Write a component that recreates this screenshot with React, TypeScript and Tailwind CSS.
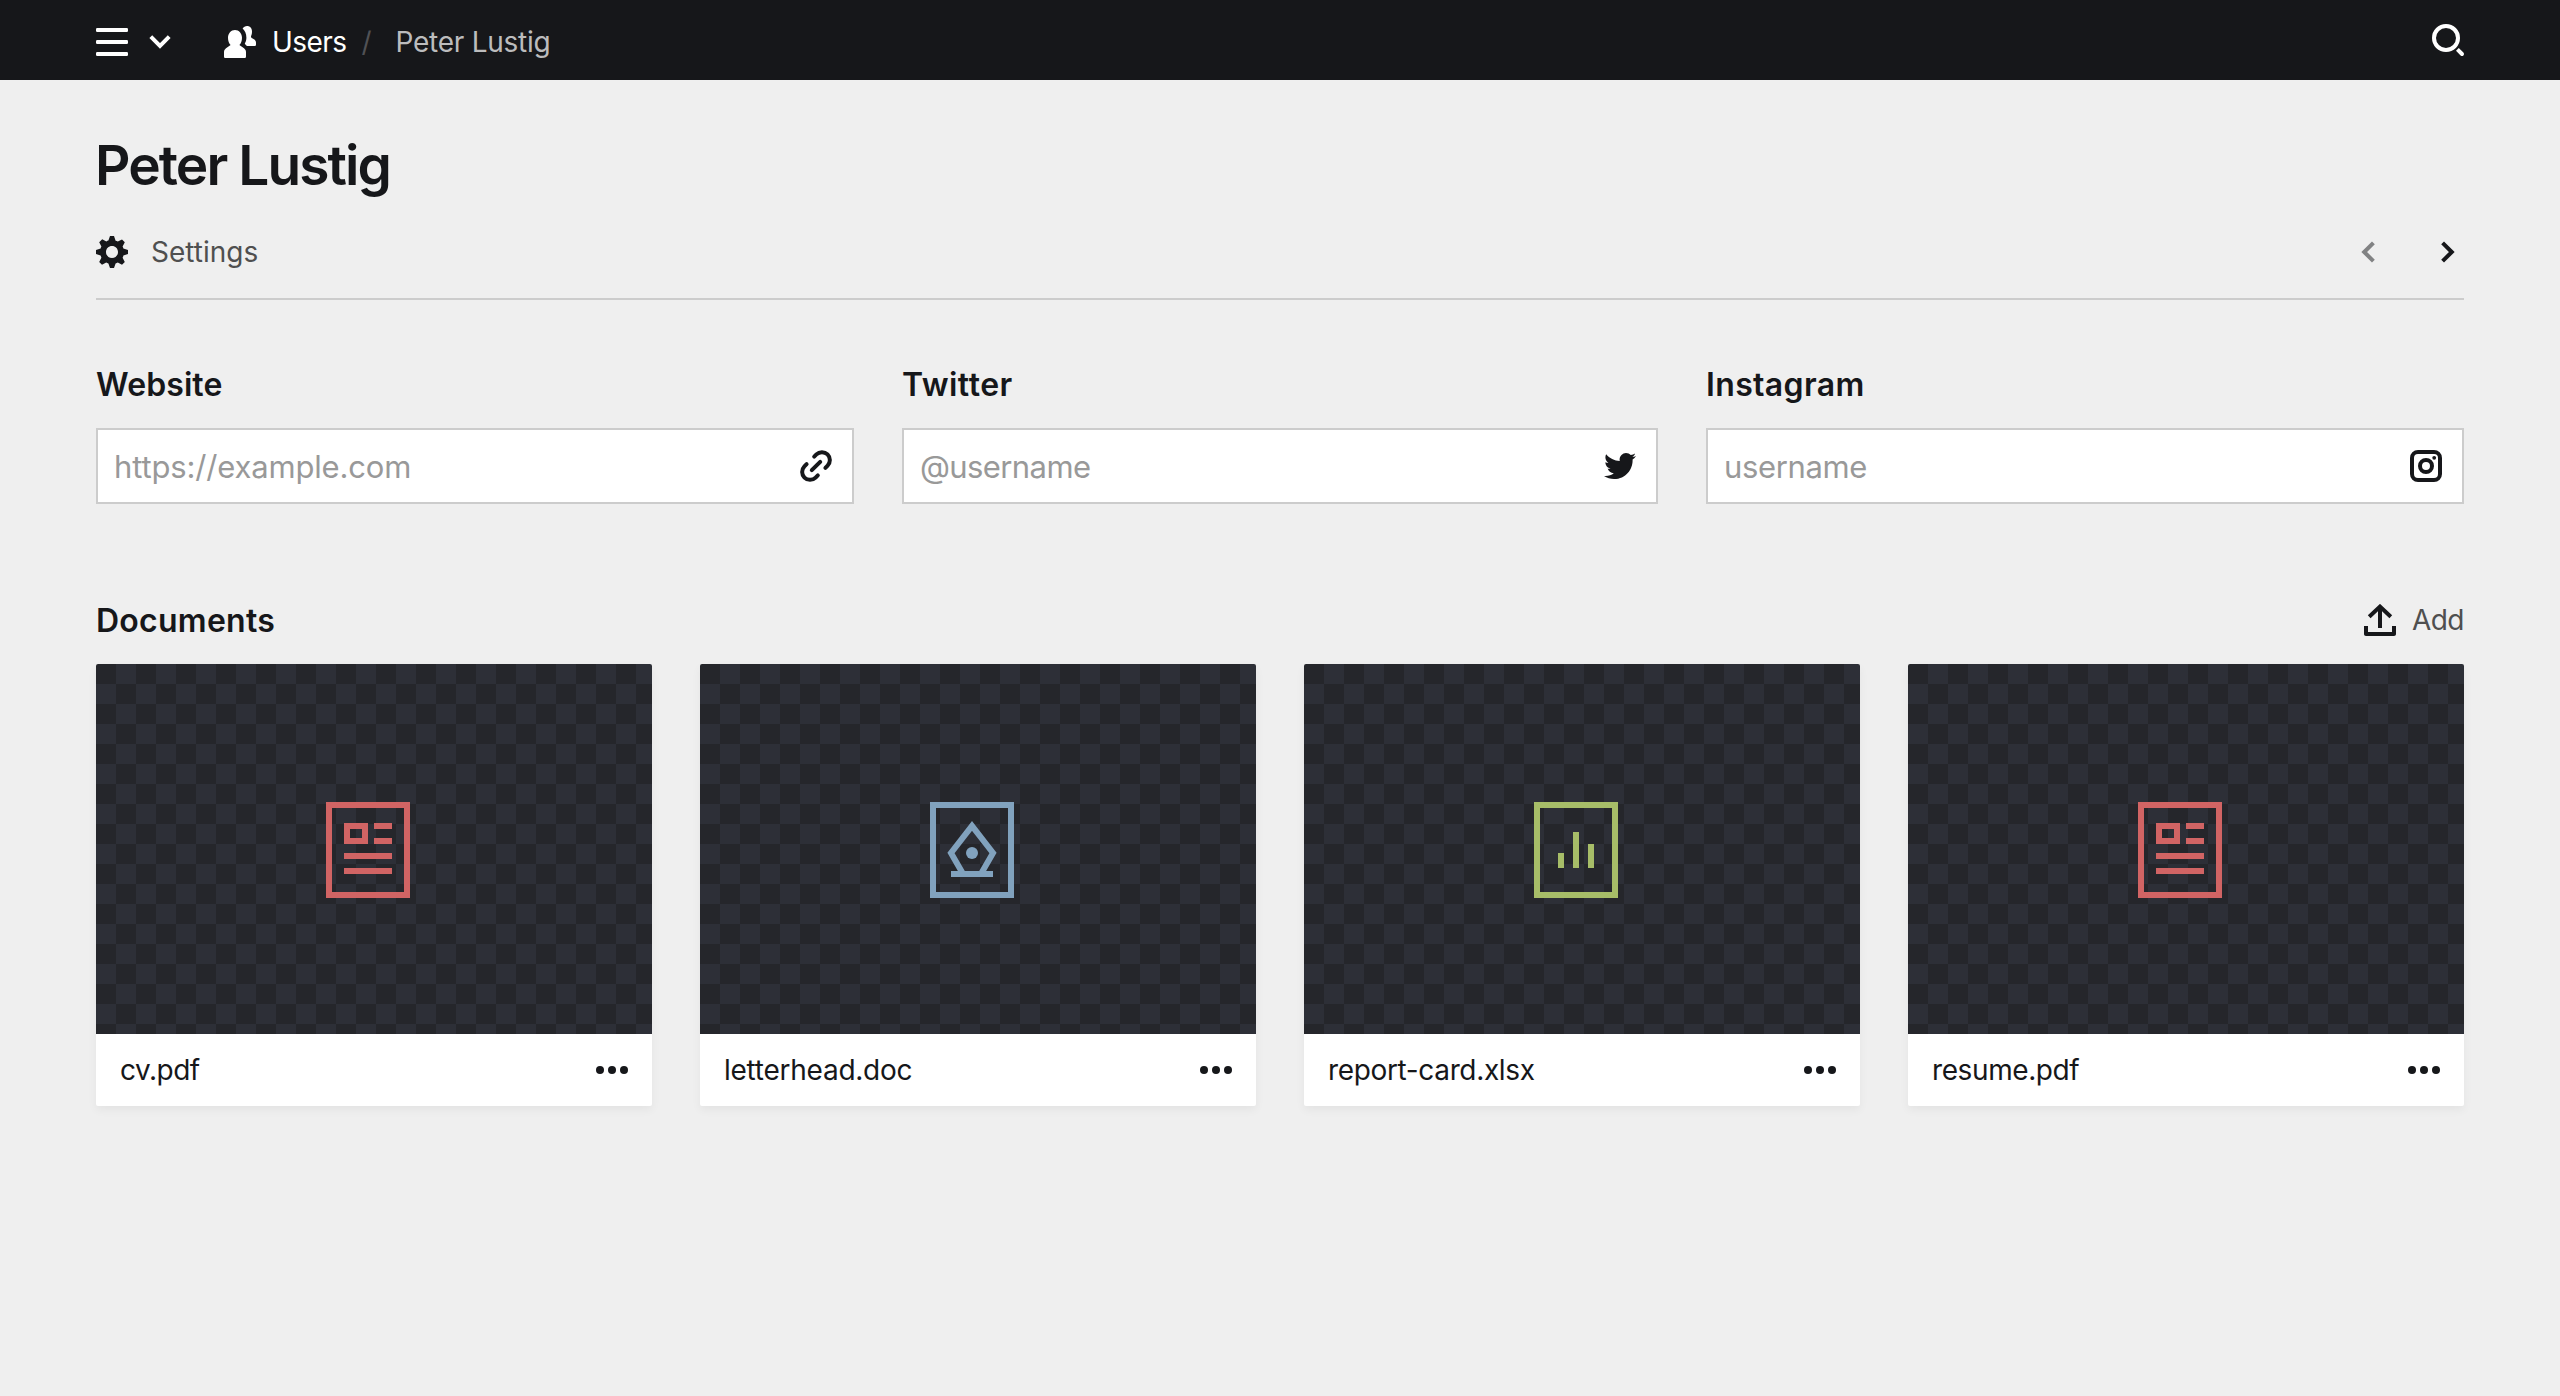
import type { ReactNode } from "react";

function Icon({ children, className = "" }: { children: ReactNode; className?: string }) {
  return (
    <svg viewBox="0 0 16 16" className={`size-8 shrink-0 ${className}`} fill="currentColor" aria-hidden="true">
      {children}
    </svg>
  );
}

const MenuIcon = () => (
  <Icon>
    <rect x="0" y="1" width="16" height="2" rx="0.6" />
    <rect x="0" y="7" width="16" height="2" rx="0.6" />
    <rect x="0" y="13" width="16" height="2" rx="0.6" />
  </Icon>
);

const Chevron = ({ className = "" }: { className?: string }) => (
  <Icon className={className}>
    <path d="M3.400 5.300L8 9.900l4.600-4.600" fill="none" stroke="currentColor" strokeWidth="2" />
  </Icon>
);

const UsersIcon = () => (
  <Icon>
    <path d="M9.300 1.300C9.800.5 10.600 0 11.500 0 13 0 14 1.100 14 2.700 14 3.700 13.800 4.500 13.500 5.100 13.500 5.600 13.700 5.900 14.100 6.100L15.200 6.800C15.700 7.200 16 7.700 16 8.400V9.200C16 9.700 15.700 10 15.200 10H11.500C11 9.600 10.800 9.300 10.500 9L10.400 8.800C10.900 8 11.200 7 11.200 5.900 11.200 3.900 10.400 2.300 9.300 1.300z" />
    <path d="M5.500 2C7.500 2 9 3.700 9 5.900 9 7.400 8.500 8.800 7.700 9.500L10 11.100C10.700 11.700 11 12.300 11 13.100V15.200C11 15.700 10.700 16 10.200 16H.8C.3 16 0 15.700 0 15.200V13.100C0 12.300.3 11.700 1 11.100L3.300 9.500C2.500 8.800 2 7.400 2 5.900 2 3.700 3.500 2 5.500 2z" />
  </Icon>
);

const SearchIcon = () => (
  <Icon>
    <circle cx="7" cy="7" r="6" fill="none" stroke="currentColor" strokeWidth="2" />
    <path d="M12 13.400L13.400 12l2.300 2.300c.4.400.4 1 0 1.400-.4.400-1 .4-1.400 0z" />
  </Icon>
);

const GearIcon = () => (
  <Icon>
    <path d="M13.300 5.200l1.100-2.100L13 1.700l-2.100 1.100c-.3-.2-.7-.3-1.100-.4L9 0H7l-.8 2.300c-.4.1-.7.2-1 .4L3.100 1.600 1.600 3.100l1.100 2.100c-.2.300-.3.600-.4 1L0 7v2l2.300.8c.1.400.3.700.4 1.100l-1.100 2.100L3 14.400l2.100-1.100c.3.200.7.300 1.100.4L7 16h2l.8-2.300c.4-.1.7-.3 1.100-.4l2.100 1.100 1.400-1.400-1.100-2.100c.2-.3.3-.7.4-1.100L16 9V7l-2.300-.8c-.1-.4-.2-.7-.4-1zM8 11c-1.700 0-3-1.300-3-3s1.300-3 3-3 3 1.300 3 3-1.300 3-3 3z" />
  </Icon>
);

const LinkIcon = () => (
  <Icon>
    <g fill="none" stroke="currentColor" strokeWidth="2" strokeLinecap="round">
      <path d="M5.900 10.100l4.200-4.200" />
      <path d="M7.100 3.300L8.200 2.200a3.960 3.960 0 0 1 5.600 5.600L12.700 8.900" />
      <path d="M8.900 12.700L7.800 13.800a3.960 3.960 0 0 1-5.600-5.600L3.300 7.100" />
    </g>
  </Icon>
);

const TwitterIcon = () => (
  <Icon>
    <path d="M16 3c-.6.3-1.200.4-1.900.5.7-.4 1.200-1 1.400-1.800-.6.4-1.300.6-2.100.8-.6-.6-1.500-1-2.400-1-1.700 0-3.200 1.500-3.200 3.300 0 .3 0 .5.1.7-2.700-.1-5.200-1.400-6.800-3.400-.3.5-.4 1-.4 1.700 0 1.100.6 2.100 1.500 2.700-.5 0-1-.2-1.500-.4 0 1.600 1.100 2.900 2.600 3.200-.3.100-.6.100-.9.100-.2 0-.4 0-.6-.1.4 1.300 1.600 2.300 3.100 2.300-1.100.9-2.500 1.400-4.100 1.400H0c1.500.9 3.200 1.500 5 1.500 6 0 9.300-5 9.300-9.300v-.4C15 4.300 15.600 3.700 16 3z" />
  </Icon>
);

const InstagramIcon = () => (
  <Icon>
    <rect x="1" y="1" width="14" height="14" rx="3" fill="none" stroke="currentColor" strokeWidth="2" />
    <circle cx="8" cy="8" r="3" fill="none" stroke="currentColor" strokeWidth="2" />
    <circle cx="12.1" cy="3.9" r="0.95" />
  </Icon>
);

const UploadIcon = () => (
  <Icon>
    <path d="M8 12V1.500M2.600 6.400L8 1.300l5.400 5.100" fill="none" stroke="currentColor" strokeWidth="2" />
    <path d="M0 11h2v3h12v-3h2v4c0 .6-.4 1-1 1H1c-.6 0-1-.4-1-1z" />
  </Icon>
);

const DotsIcon = () => (
  <Icon>
    <circle cx="2" cy="8" r="2" />
    <circle cx="8" cy="8" r="2" />
    <circle cx="14" cy="8" r="2" />
  </Icon>
);

type FileKind = "pdf" | "doc" | "sheet";

const kindColor: Record<FileKind, string> = {
  pdf: "text-[#d16464]",
  doc: "text-[#81a2be]",
  sheet: "text-[#a7bd68]",
};

function FileIcon({ kind }: { kind: FileKind }) {
  return (
    <svg viewBox="0 0 96 96" className={`size-24 ${kindColor[kind]}`} fill="none" stroke="currentColor" strokeWidth="6">
      <rect x="3" y="3" width="78" height="90" />
      {kind === "pdf" && (
        <>
          <rect x="21" y="24" width="18" height="15" />
          <path d="M48 24h18M48 39h18M18 54h48M18 69h48" />
        </>
      )}
      {kind === "doc" && (
        <>
          <path d="M32.500 71L21 51l21-27 21 27-11.500 20M21 72h42" />
          <circle cx="42" cy="51" r="6" fill="currentColor" stroke="none" />
        </>
      )}
      {kind === "sheet" && <path d="M27 51v15M42 30v36M57 42v24" />}
    </svg>
  );
}

const fields = [
  { label: "Website", placeholder: "https://example.com", icon: <LinkIcon />, labelTrack: "tracking-[0.1px]", track: "tracking-[-0.16px]" },
  { label: "Twitter", placeholder: "@username", icon: <TwitterIcon />, labelTrack: "tracking-[0.5px]", track: "tracking-[-0.6px]" },
  { label: "Instagram", placeholder: "username", icon: <InstagramIcon />, labelTrack: "tracking-[0.35px]", track: "tracking-[-0.35px]" },
];

const files: { name: string; kind: FileKind; track: string }[] = [
  { name: "cv.pdf", kind: "pdf", track: "tracking-[-0.5px]" },
  { name: "letterhead.doc", kind: "doc", track: "tracking-[-0.25px]" },
  { name: "report-card.xlsx", kind: "sheet", track: "tracking-[-0.35px]" },
  { name: "resume.pdf", kind: "pdf", track: "tracking-[-0.4px]" },
];

function Topbar() {
  return (
    <header className="flex h-20 items-center justify-between bg-[#16171a] px-24 text-white">
      <nav className="flex items-center pt-1 text-[28px] leading-10">
        <button className="flex items-center gap-4">
          <MenuIcon />
          <Chevron />
        </button>
        <a className="ml-12 flex items-center gap-4">
          <UsersIcon />
          <span className="tracking-[-0.55px]">Users</span>
        </a>
        <span className="ml-[15px] w-[34px] text-[#505155]">/</span>
        <a className="tracking-[-0.25px] text-[#bcbcbd]">Peter Lustig</a>
      </nav>
      <button>
        <SearchIcon />
      </button>
    </header>
  );
}

function FileCard({ name, kind, track }: { name: string; kind: FileKind; track: string }) {
  return (
    <article className="overflow-hidden rounded-[2px] bg-white shadow-[0_4px_10px_rgba(0,0,0,0.05)]">
      <div className="flex h-[370px] items-center justify-center bg-[repeating-conic-gradient(#2d2f37_0%_25%,#25262b_0%_50%)] bg-[length:40px_40px] pt-0.5">
        <FileIcon kind={kind} />
      </div>
      <div className="flex h-[72px] items-center justify-between px-6">
        <span className={`text-[28px] leading-10 ${track}`}>{name}</span>
        <button>
          <DotsIcon />
        </button>
      </div>
    </article>
  );
}

export default function App() {
  return (
    <div className="min-h-screen bg-[#efefef] font-['Inter',sans-serif] text-[#16171a]">
      <Topbar />
      <main className="px-24 pt-[49px]">
        <h1 className="-ml-px text-[55px] leading-[72px] font-semibold tracking-[-1.9px]">Peter Lustig</h1>

        <div className="flex items-center justify-between border-b-2 border-[#ccc] pt-[35px] pb-[30px]">
          <button className="flex h-8 items-center gap-[23px]">
            <GearIcon />
            <span className="text-[28px] text-[#4f4f4f]">Settings</span>
          </button>
          <div className="flex gap-12">
            <button className="opacity-50">
              <Chevron className="rotate-90" />
            </button>
            <button>
              <Chevron className="-rotate-90" />
            </button>
          </div>
        </div>

        <form className="mt-[61px] grid grid-cols-[758fr_756fr_758fr] gap-12">
          {fields.map((f) => (
            <label key={f.label} className="flex flex-col gap-[19px]">
              <span className={`text-[32px] leading-[48px] font-semibold ${f.labelTrack}`}>{f.label}</span>
              <span className="flex h-[76px] items-center border-2 border-[#ccc] bg-white pr-5 pl-4">
                <input
                  className={`h-full min-w-0 flex-1 text-[31px] outline-none placeholder:text-[#999] ${f.track}`}
                  placeholder={f.placeholder}
                />
                {f.icon}
              </span>
            </label>
          ))}
        </form>

        <section className="mt-[92px]">
          <div className="mb-5 flex h-12 items-center justify-between">
            <h2 className="pt-0.5 text-[32px] leading-[48px] font-semibold tracking-[0.25px]">Documents</h2>
            <button className="flex items-center gap-4">
              <UploadIcon />
              <span className="text-[28px] tracking-[-0.53px] text-[#4f4f4f]">Add</span>
            </button>
          </div>
          <div className="grid grid-cols-4 gap-12">
            {files.map((f) => (
              <FileCard key={f.name} {...f} />
            ))}
          </div>
        </section>
      </main>
    </div>
  );
}
